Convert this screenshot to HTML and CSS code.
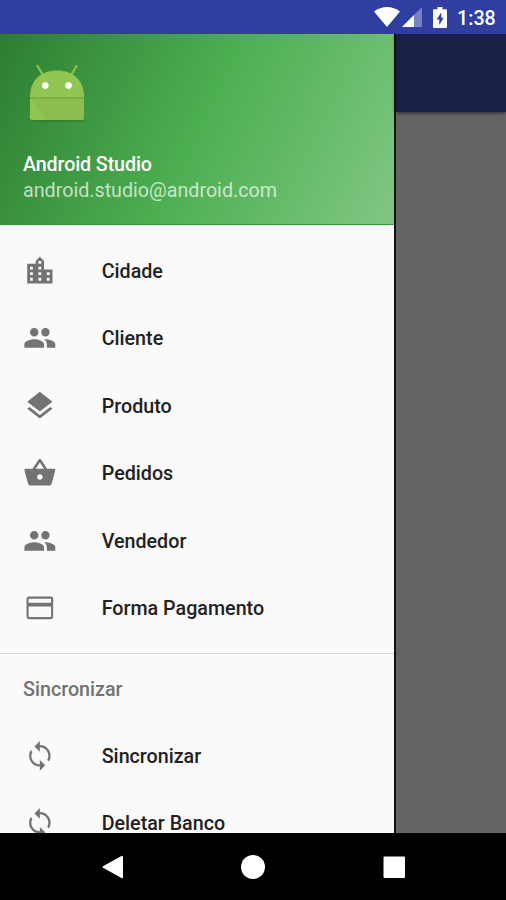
FILE: index.html
```html
<!DOCTYPE html>
<html lang="pt-BR">
<head>
<meta charset="utf-8">
<title>Android Studio</title>
<link rel="stylesheet" href="styles.css">
</head>
<body>
<svg class="defs" aria-hidden="true">
  <symbol id="city" viewBox="0 0 24 24"><path d="M15 11V5l-3-3-3 3v2H3v14h18V11h-6zm-8 8H5v-2h2v2zm0-4H5v-2h2v2zm0-4H5V9h2v2zm6 8h-2v-2h2v2zm0-4h-2v-2h2v2zm0-4h-2V9h2v2zm0-4h-2V5h2v2zm6 12h-2v-2h2v2zm0-4h-2v-2h2v2z"/></symbol>
  <symbol id="people" viewBox="0 0 24 24"><path d="M16 11c1.66 0 2.99-1.34 2.99-3S17.66 5 16 5s-3 1.34-3 3 1.34 3 3 3zm-8 0c1.66 0 2.99-1.34 2.99-3S9.66 5 8 5 5 6.34 5 8s1.34 3 3 3zm0 2c-2.33 0-7 1.17-7 3.5V19h14v-2.5c0-2.33-4.67-3.5-7-3.5zm8 0c-.29 0-.62.02-.97.05 1.16.84 1.97 1.97 1.97 3.45V19h6v-2.5c0-2.33-4.67-3.5-7-3.5z"/></symbol>
  <symbol id="layers" viewBox="0 0 24 24"><path d="M11.99 18.54l-7.37-5.73L3 14.07l9 7 9-7-1.63-1.27-7.38 5.74zM12 16l7.36-5.73L21 9l-9-7-9 7 1.63 1.27L12 16z"/></symbol>
  <symbol id="basket" viewBox="0 0 24 24"><path d="M17.21 9l-4.38-6.56c-.19-.28-.51-.42-.83-.42-.32 0-.64.14-.83.43L6.79 9H2c-.55 0-1 .45-1 1 0 .09.01.18.04.27l2.54 9.27c.23.84 1 1.46 1.92 1.46h13c.92 0 1.69-.62 1.93-1.46l2.54-9.27L23 10c0-.55-.45-1-1-1h-4.79zM9 9l3-4.4L15 9H9zm3 8c-1.1 0-2-.9-2-2s.9-2 2-2 2 .9 2 2-.9 2-2 2z"/></symbol>
  <symbol id="card" viewBox="0 0 24 24"><path fill-rule="evenodd" d="M4.200 3.900h15.600q1.700 0 1.700 1.700v12.800q0 1.700-1.700 1.700H4.200q-1.700 0-1.700-1.700V5.600q0-1.700 1.700-1.700zM4 5.500v2.900h16V5.500zM4 11v7.500h16V11z"/></symbol>
  <symbol id="sync" viewBox="-.5 -.5 25 25"><path d="M12 4V1L8 5l4 4V5.700c3.480 0 6.300 2.820 6.300 6.300 0 1.060-.26 2.070-.74 2.940l1.200 1.320C19.540 15.030 20 13.570 20 12c0-4.420-3.580-8-8-8zm0 14.300c-3.480 0-6.300-2.820-6.300-6.300 0-1.060.26-2.070.74-2.940L5.240 7.740C4.460 8.970 4 10.430 4 12c0 4.420 3.580 8 8 8v3l4-4-4-4z"/></symbol>
</svg>
<div class="screen">
  <header class="status">
    <svg class="wifi" viewBox="0 0 26 20"><path d="M0 4.6C7.5-1.4 18.500-1.400 26 4.600L13 20z"/></svg>
    <svg class="signal" viewBox="0 0 20 20"><path class="dim" d="M20 0v20H0z"/><path d="M12 8v12H0z"/></svg>
    <svg class="battery" viewBox="0 0 14 21"><path fill-rule="evenodd" d="M4.500 0h5v2.200H13q1 0 1 1V20q0 1-1 1H1q-1 0-1-1V3.200q0-1 1-1h3.500zM8.300 5.500L3.500 12.500H6.300V18L10.700 10.800H8.300z"/></svg>
    <span class="clock">1:38</span>
  </header>
  <main class="content">
    <nav class="drawer">
      <section class="profile">
        <svg class="avatar" viewBox="0 0 58 60">
          <path class="shadow" d="M3 55h53v1q0 2-2 2H5q-2 0-2-2z"/>
          <path class="antenna" d="M9.500 2l6 10M48.500 2l-6 10"/>
          <path class="robot" d="M2 33C2 16 13 6.500 29 6.500S56 16 56 33v21q0 2-2 2H4q-2 0-2-2z"/>
          <path class="shade" d="M2 33.500h54V56H18z"/>
          <path class="seam" d="M2 34h54"/>
          <circle class="eye" cx="17.300" cy="21.600" r="3.300"/><circle class="eye" cx="40.500" cy="21.600" r="3.300"/>
        </svg>
        <div class="name">Android Studio</div>
        <div class="email">android.studio@android.com</div>
      </section>
      <ul class="menu">
        <li><svg><use href="#city"/></svg><span>Cidade</span></li>
        <li><svg><use href="#people"/></svg><span>Cliente</span></li>
        <li><svg><use href="#layers"/></svg><span>Produto</span></li>
        <li><svg><use href="#basket"/></svg><span>Pedidos</span></li>
        <li><svg><use href="#people"/></svg><span>Vendedor</span></li>
        <li><svg><use href="#card"/></svg><span>Forma Pagamento</span></li>
      </ul>
      <h2 class="subheader">Sincronizar</h2>
      <ul class="menu second">
        <li><svg><use href="#sync"/></svg><span>Sincronizar</span></li>
        <li><svg><use href="#sync"/></svg><span>Deletar Banco</span></li>
      </ul>
    </nav>
    <div class="behind"><div class="appbar"></div></div>
  </main>
  <footer class="navbar">
    <svg viewBox="0 0 24 24"><path d="M2 11.300L20.500.900q1.500-.7 1.500.8v20.600q0 1.500-1.500.8L2 12.700q-1-.7 0-1.400z"/></svg>
    <svg viewBox="0 0 24 24"><circle cx="12" cy="12" r="12"/></svg>
    <svg viewBox="0 0 24 24"><rect x="1.500" y="1.500" width="21.500" height="21.500" rx="1"/></svg>
  </footer>
</div>
</body>
</html>
```
FILE: styles.css
```css
* { box-sizing: border-box; }
body { margin: 0; font-family: Roboto, "Liberation Sans", sans-serif; }
.defs { display: none; }
.screen { width: 506px; height: 900px; display: flex; flex-direction: column; overflow: hidden; background: #000; }

.status { height: 34px; flex: none; display: flex; align-items: flex-start; padding: 7px 11px 0 0; justify-content: flex-end; background: #303f9f; color: #fff; fill: #fff; }
.wifi { width: 26px; height: 20px; margin-right: 2px; }
.signal { width: 20px; height: 20px; margin: 0 11px 0 0; }
.dim { opacity: .35; }
.battery { width: 14px; height: 21px; margin-right: 10px; }
.clock { font-size: 19.7px; line-height: 23px; font-weight: 500; width: 38px; white-space: nowrap; }

.content { height: 799px; flex: none; display: flex; overflow: hidden; }
.drawer { width: 394px; flex: none; background: #fafafa; }
.profile { height: 191px; padding: 29.5px 23px 0; background: linear-gradient(115.9deg, #2e7d32, #4caf50 50%, #81c784); border-bottom: 1px solid #2f9a37; }
.avatar { display: block; width: 58px; height: 60px; margin-left: 4.7px; }
.antenna { fill: none; stroke: #8bc34a; stroke-width: 2.2; stroke-linecap: round; }
.robot { fill: #92c653; }
.shade { fill: #7fb048; opacity: .35; }
.seam { fill: none; stroke: #72a744; stroke-width: 1.300; }
.shadow { fill: #276f2b; opacity: .45; }
.eye { fill: #fff; }
.name { margin-top: 28.5px; font-size: 19.7px; line-height: 26px; font-weight: 500; letter-spacing: -.12px; color: #fff; white-space: nowrap; }
.email { font-size: 19.7px; line-height: 26px; color: rgba(255, 255, 255, .7); white-space: nowrap; }

.menu { list-style: none; margin: 0; padding: 12px 0 11px; }
.menu li { height: 67.47px; display: flex; align-items: center; padding-left: 23px; gap: 45px; }
.menu svg { width: 33.7px; height: 33.7px; fill: #737373; flex: none; }
.menu span { padding-top: 2px; font-size: 19.7px; font-weight: 500; line-height: 24px; color: #212121; white-space: nowrap; }
.subheader { margin: 0; height: 69px; padding: 1px 0 0 23px; border-top: 1px solid #dadada; font-size: 19.7px; font-weight: 500; line-height: 69px; color: #737373; }
.menu.second { padding: 0; }

.behind { flex: 1; background: #646464; border-left: 2px solid #111; }
.appbar { height: 78px; background: #192048; box-shadow: 0 1px 4px rgba(0, 0, 0, .6); }

.navbar { height: 67px; flex: none; display: flex; align-items: center; justify-content: center; gap: 116.5px; fill: #fff; }
.navbar svg { width: 24px; height: 24px; }
```
